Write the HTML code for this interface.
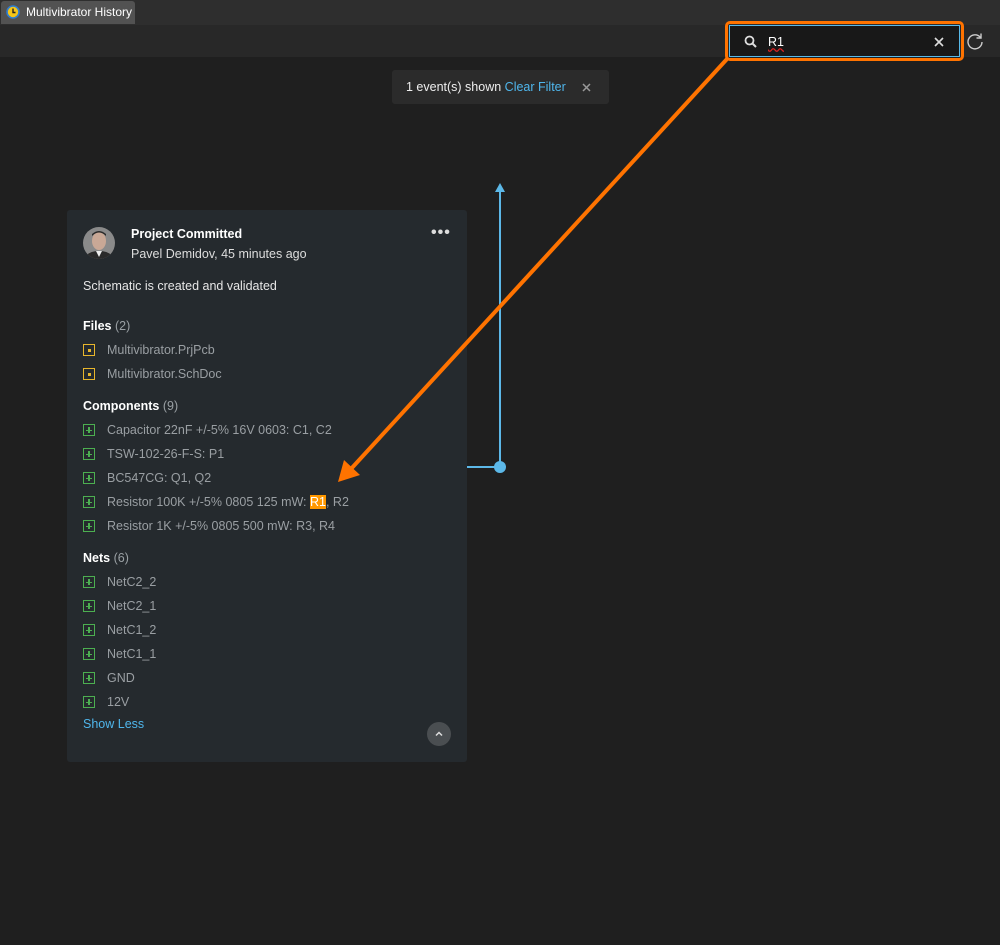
<!DOCTYPE html>
<html><head><style>
body{margin:0;width:1000px;height:945px;background:#1f1f1f;font-family:"Liberation Sans",sans-serif;position:relative;overflow:hidden}
.tabbar{position:absolute;left:0;top:0;width:1000px;height:25px;background:#2e2e2e}
.tab{position:absolute;left:1px;top:1px;width:134px;height:23px;background:#525252;border-radius:3px 3px 0 0;color:#fff;font-size:12px;line-height:23px}
.tool{position:absolute;left:0;top:25px;width:1000px;height:32px;background:#282828}
.search{position:absolute;left:725px;top:21px;width:239px;height:40px;border:3px solid #ff7300;border-radius:5px;box-sizing:border-box}
.search .in{position:absolute;left:1px;top:1px;right:1px;bottom:1px;border:1px solid #58b9e8;background:#181818}
.toast{position:absolute;left:392px;top:70px;width:217px;height:34px;background:#2b2b2b;border-radius:3px;color:#eee;font-size:12.5px;line-height:34px}
.card{position:absolute;left:67px;top:210px;width:400px;height:552px;background:#252a2e;border-radius:3px;font-size:12.5px}
.card > div{margin-top:1px}
.t{position:absolute;white-space:nowrap}
.h{color:#fff;font-weight:bold}
.g{color:#9aa0a4}
.it{position:absolute;left:16px;color:#9a9fa3;white-space:nowrap}
.ic{display:inline-block;width:10px;height:10px;border:1px solid #4caf50;vertical-align:-2px;margin-right:12px;position:relative}
.ic:before{content:"";position:absolute;left:2px;top:4.5px;width:6px;height:1.5px;background:#4caf50}
.ic:after{content:"";position:absolute;left:4.3px;top:2px;width:1.5px;height:6px;background:#4caf50}
.fi{display:inline-block;width:10px;height:10px;border:1px solid #e8b62c;vertical-align:-2px;margin-right:12px;position:relative}
.fi:after{content:"";position:absolute;left:3.5px;top:3.5px;width:3px;height:3px;background:#e8b62c}
</style></head><body>
<div class="tabbar"><div class="tab"><svg style="position:absolute;left:5px;top:4px" width="14" height="14"><circle cx="7" cy="7" r="6" fill="#f5c518" stroke="#2f7dd1" stroke-width="1.6"/><path d="M7 3.5V7.5H9.5" stroke="#222" stroke-width="1.4" fill="none"/></svg><span style="position:absolute;left:25px">Multivibrator History</span></div></div>
<div class="tool"></div>
<div class="search"><div class="in">
<svg style="position:absolute;left:14px;top:9px" width="14" height="14"><circle cx="5.5" cy="5.5" r="4" stroke="#ddd" stroke-width="1.8" fill="none"/><path d="M8.5 8.5L12 12" stroke="#ddd" stroke-width="2"/></svg>
<span style="position:absolute;left:38px;top:9px;color:#fff;font-size:12.5px;text-decoration:underline wavy #d22">R1</span>
<svg style="position:absolute;left:204px;top:11px" width="10" height="10"><path d="M1 1L9 9M9 1L1 9" stroke="#ddd" stroke-width="1.6"/></svg></div></div>
<svg style="position:absolute;left:965px;top:31px" width="20" height="20"><path d="M15.5 6.5A7 7 0 1 0 17 11" stroke="#ccc" stroke-width="1.4" fill="none"/><path d="M16 2.5V7H11.5" stroke="#ccc" stroke-width="1.4" fill="none"/></svg>
<div class="toast"><span style="position:absolute;left:14px">1 event(s) shown <span style="color:#4fb6ec">Clear Filter</span></span><svg style="position:absolute;left:190px;top:13px" width="9" height="9"><path d="M1 1L8 8M8 1L1 8" stroke="#999" stroke-width="1.5"/></svg></div>
<svg style="position:absolute;left:0;top:0" width="1000" height="945">
<path d="M500 467V188" stroke="#5cb8e8" stroke-width="2"/><path d="M495 192L500 183L505 192Z" fill="#5cb8e8"/>
<path d="M467 467H500" stroke="#5cb8e8" stroke-width="2"/><circle cx="500" cy="467" r="6" fill="#5cb8e8"/>
</svg>
<div class="card">
<svg style="position:absolute;left:16px;top:17px" width="32" height="32"><defs><clipPath id="c"><circle cx="16" cy="16" r="16"/></clipPath></defs><g clip-path="url(#c)"><rect width="32" height="32" fill="#8a8a8a"/><ellipse cx="16" cy="14" rx="7" ry="9" fill="#c9a896"/><path d="M9 9Q16 2 23 9L23 7Q16 1 9 7Z" fill="#2a2a2a"/><path d="M2 32Q4 24 16 24Q28 24 30 32Z" fill="#2a2a2a"/><path d="M13 24L16 30L19 24Z" fill="#eee"/></g></svg>
<div class="t h" style="left:64px;top:16px">Project Committed</div>
<div class="t" style="left:64px;top:36px;color:#ddd">Pavel Demidov, 45 minutes ago</div>
<div class="t" style="left:364px;top:13px;color:#ddd;font-size:16px;letter-spacing:1px;font-weight:bold">•••</div>
<div class="t" style="left:16px;top:68px;color:#e6e6e6">Schematic is created and validated</div>
<div class="t h" style="left:16px;top:108px">Files <span class="g" style="font-weight:normal">(2)</span></div>
<div class="it" style="top:132px"><span class="fi"></span>Multivibrator.PrjPcb</div>
<div class="it" style="top:156px"><span class="fi"></span>Multivibrator.SchDoc</div>
<div class="t h" style="left:16px;top:188px">Components <span class="g" style="font-weight:normal">(9)</span></div>
<div class="it" style="top:212px"><span class="ic"></span>Capacitor 22nF +/-5% 16V 0603: C1, C2</div>
<div class="it" style="top:236px"><span class="ic"></span>TSW-102-26-F-S: P1</div>
<div class="it" style="top:260px"><span class="ic"></span>BC547CG: Q1, Q2</div>
<div class="it" style="top:284px"><span class="ic"></span>Resistor 100K +/-5% 0805 125 mW: <span style="background:#ff9800;color:#fff">R1</span>, R2</div>
<div class="it" style="top:308px"><span class="ic"></span>Resistor 1K +/-5% 0805 500 mW: R3, R4</div>
<div class="t h" style="left:16px;top:340px">Nets <span class="g" style="font-weight:normal">(6)</span></div>
<div class="it" style="top:364px"><span class="ic"></span>NetC2_2</div>
<div class="it" style="top:388px"><span class="ic"></span>NetC2_1</div>
<div class="it" style="top:412px"><span class="ic"></span>NetC1_2</div>
<div class="it" style="top:436px"><span class="ic"></span>NetC1_1</div>
<div class="it" style="top:460px"><span class="ic"></span>GND</div>
<div class="it" style="top:484px"><span class="ic"></span>12V</div>
<div class="t" style="left:16px;top:506px;color:#4fb6ec">Show Less</div>
<svg style="position:absolute;left:360px;top:512px" width="24" height="24"><circle cx="12" cy="12" r="12" fill="#4a4e51"/><path d="M9 13.5L12 10.5L15 13.5" stroke="#ddd" stroke-width="1.5" fill="none"/></svg>
</div>
<svg style="position:absolute;left:0;top:0" width="1000" height="945">
<path d="M727 59L350 470" stroke="#ff7300" stroke-width="4"/><path d="M338 482L344 460L360 475Z" fill="#ff7300"/>
</svg>
</body></html>
